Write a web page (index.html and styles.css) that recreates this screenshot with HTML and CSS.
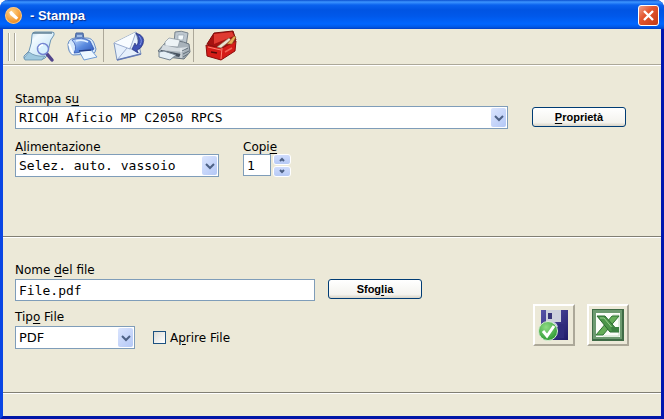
FILE: index.html
```
<!DOCTYPE html>
<html lang="it">

<head>
	<meta charset="UTF-8" />
	<title>Stampa</title>
	<link rel="stylesheet" href="styles.css">
</head>

<body>
	<div class="window">
		<header class="titlebar">
			<svg class="app-icon" viewBox="0 0 16 16" aria-hidden="true">
				<defs>
					<radialGradient id="orange" cx=".4" cy=".3" r=".7">
						<stop offset="0" stop-color="#ffd48a" />
						<stop offset="1" stop-color="#f08a1c" />
					</radialGradient>
				</defs>
				<circle cx="8" cy="8" r="7.500" fill="url(#orange)" stroke="#ffc87e" />
				<path d="M4 5l2-1.500 6.500 6.500-2 2L5 7.500z" fill="#fff" />
			</svg>
			<h1 class="title">- Stampa</h1>
			<button class="close" type="button" aria-label="Chiudi">
				<svg viewBox="0 0 19 19"><path d="M5 5l9 9M14 5l-9 9" stroke="#fff" stroke-width="2.400" /></svg>
			</button>
		</header>

		<nav class="toolbar">
			<span class="grip"></span>
			<div class="tool-group">
				<!-- preview -->
				<button class="tool" type="button" aria-label="Anteprima">
					<svg viewBox="19 29 40 34">
						<defs>
							<linearGradient id="paper" x1="0" y1="0" x2="1" y2="1">
								<stop offset="0" stop-color="#8fc3e2" />
								<stop offset=".3" stop-color="#f2faff" />
								<stop offset="1" stop-color="#b4dcf2" />
							</linearGradient>
						</defs>
						<path d="M32 35q0-3 3-3h17q3 0 2 3-4 4-5 12l-3 10q-1 2-4 2H26q-3 0-2-3l5-5q3-8 3-16z" fill="url(#paper)" stroke="#6a94b4" />
						<path d="M24 58l5-6q6 5 16 4l-3 4H25z" fill="#9fc9df" stroke="#5d87a3" stroke-width=".7" />
						<path d="M33 33h19" stroke="#5f7f94" stroke-width="1.500" />
						<path d="M47 54l5 6" stroke="#51448c" stroke-width="3.500" stroke-linecap="round" />
						<circle cx="43" cy="49" r="5.500" fill="#d9f2ff" fill-opacity=".8" stroke="#7586d2" stroke-width="1.500" />
						<path d="M39 48q1-3 4-3" fill="none" stroke="#fff" stroke-width="1.500" />
					</svg>
				</button>
				<!-- print -->
				<button class="tool" type="button" aria-label="Stampa">
					<svg viewBox="62 29 40 34">
						<defs>
							<linearGradient id="blue" x1="0" y1="0" x2="1" y2="1">
								<stop offset="0" stop-color="#cce4ff" />
								<stop offset=".5" stop-color="#5c8ce0" />
								<stop offset="1" stop-color="#2d55b8" />
							</linearGradient>
						</defs>
						<path d="M75 39l1-6h7l1 6z" fill="#6687c0" stroke="#47659c" />
						<path d="M77 36h5" stroke="#b9d0f5" stroke-width="1.500" />
						<path d="M68 44q1-6 8-6h11q5 0 7 5l2 6q0 4-4 5l-19 1q-5-2-5-11z" fill="#d4e8fb" stroke="#6b8fc4" />
						<path d="M72 40q10-4 18 1l4 8q-4 4-11 3l-9 1q4-7-2-13z" fill="url(#blue)" stroke="#2c4fae" stroke-width=".7" />
						<path d="M76 41q6-2 12 1" fill="none" stroke="#e3f1ff" stroke-width="1.500" />
						<path d="M69 44l4 10" stroke="#fff" stroke-width="2" />
						<path d="M79 51l12-1 6 7-13 3z" fill="#edf7ff" stroke="#6e9bd5" />
						<path d="M79 51l12-1" stroke="#243e88" stroke-width="1.500" />
					</svg>
				</button>
			</div>
			<div class="tool-group">
				<!-- mail -->
				<button class="tool" type="button" aria-label="Invia per e-mail">
					<svg viewBox="109 29 40 34">
						<path d="M114 43l22-11 5 22-24 6z" fill="#e6f0fc" stroke="#8098be" stroke-linejoin="round" />
						<path d="M114 43l16 6 6-17M117 60l10-12M141 54l-12-6" fill="#f8fcff" stroke="#9caed0" />
						<path d="M117 60l24-6" stroke="#6379b5" stroke-width="1.500" />
						<path d="M136 33q10 3 7 11-2 5-6 6l1 3-6-4 3-6 1 3q5-5 0-13z" fill="#3c50b4" stroke="#25327e" stroke-width=".7" />
						<path d="M139 36q4 4 1 9" fill="none" stroke="#8398e5" />
					</svg>
				</button>
				<!-- fax -->
				<button class="tool" type="button" aria-label="Fax">
					<svg viewBox="152 29 40 34">
						<path d="M174 43l1-11q6-2 13 1l-2 13z" fill="#bdc7cf" stroke="#78848e" />
						<path d="M178 35h6l-1 5h-5z" fill="#f4fafc" stroke="#96a4b0" stroke-width=".7" />
						<path d="M158 51l8-9q12-3 23 2l1 8-6 7-17-2z" fill="#a8b2ba" stroke="#68747e" />
						<path d="M165 42l4-4 11 2-2 7-13-1z" fill="#edf3f6" stroke="#919ca5" stroke-width=".8" />
						<path d="M163 45l14 3 11-1-5 5-22-2z" fill="#d5dce1" />
						<path d="M161 50l20 4-2 3-19-4z" fill="#47525f" />
						<path d="M159 52l5-1 12 4-6 5-11-3z" fill="#e4eef5" stroke="#748391" />
						<path d="M182 51l6-3M183 54l6-3M183 57l5-3" stroke="#63707b" />
						<path d="M181 48v10" stroke="#e9eef1" />
					</svg>
				</button>
			</div>
			<div class="tool-group">
				<!-- settings toolbox -->
				<button class="tool" type="button" aria-label="Impostazioni">
					<svg viewBox="199 29 40 34">
						<path d="M207 44l7-11 19-2 3 9-14 10z" fill="#a51210" stroke="#7e0b0a" />
						<path d="M214 34l18-2 2 4-20 8z" fill="#df3a31" />
						<path d="M206 45l16 3 14-7-1 10-14 9-14-4z" fill="#d51c18" stroke="#8c0d0c" />
						<path d="M222 48l-1 11M208 47l13 3" stroke="#ff8272" />
						<path d="M217 47l12-9 2 2-10 8z" fill="#eae4d2" stroke="#8f7455" stroke-width=".6" />
						<path d="M227 44l7-8 2 1-4 7z" fill="#e6b25c" stroke="#8c5620" stroke-width=".6" />
						<path d="M211 52l6 1" stroke="#530907" stroke-width="1.500" />
						<path d="M225 52l7-4" stroke="#f26456" stroke-width="1.500" />
					</svg>
				</button>
			</div>
		</nav>

		<form class="content">
			<section class="panel print-panel">
				<div class="row">
					<div class="field grow">
						<label for="printer">Stampa s<u>u</u></label>
						<div class="combo">
							<select id="printer" class="mono">
								<option>RICOH Aficio MP C2050 RPCS</option>
							</select>
							<svg class="arrow" viewBox="0 0 15 19"><path d="M4 8l4 4 4-4" /></svg>
						</div>
					</div>
					<button class="button" type="button"><u>P</u>roprietà</button>
				</div>
				<div class="row">
					<div class="field tray">
						<label for="tray">A<u>l</u>imentazione</label>
						<div class="combo">
							<select id="tray" class="mono">
								<option>Selez. auto. vassoio</option>
							</select>
							<svg class="arrow" viewBox="0 0 15 19"><path d="M4 8l4 4 4-4" /></svg>
						</div>
					</div>
					<div class="field">
						<label for="copies">Copi<u>e</u></label>
						<div class="spinner">
							<input id="copies" class="mono" type="text" inputmode="numeric" value="1">
							<div class="steps">
								<button type="button" aria-label="Aumenta"><svg viewBox="0 0 16 9"><path d="M6 6l2-2 2 2" /></svg></button>
								<button type="button" aria-label="Diminuisci"><svg viewBox="0 0 16 9"><path d="M6 3l2 2 2-2" /></svg></button>
							</div>
						</div>
					</div>
				</div>
			</section>

			<section class="panel file-panel">
				<div class="file-fields">
					<div class="row">
						<div class="field file-name">
							<label for="filename">Nome <u>d</u>el file</label>
							<input id="filename" class="mono" type="text" value="File.pdf">
						</div>
						<button class="button" type="button">Sfog<u>l</u>ia</button>
					</div>
					<div class="row">
						<div class="field file-type">
							<label for="filetype">Tip<u>o</u> File</label>
							<div class="combo">
								<select id="filetype">
									<option>PDF</option>
								</select>
								<svg class="arrow" viewBox="0 0 15 19"><path d="M4 8l4 4 4-4" /></svg>
							</div>
						</div>
						<div class="check">
							<input id="open-file" type="checkbox">
							<label for="open-file">A<u>p</u>rire File</label>
						</div>
					</div>
				</div>
				<div class="actions">
					<button class="action" type="button" aria-label="Salva">
						<svg viewBox="0 0 38 38">
							<defs>
								<linearGradient id="disk" x1="0" y1="0" x2="1" y2="1">
									<stop offset="0" stop-color="#5754a8" />
									<stop offset="1" stop-color="#1f1a68" />
								</linearGradient>
								<radialGradient id="green" cx=".4" cy=".3" r=".8">
									<stop offset="0" stop-color="#8fdc84" />
									<stop offset="1" stop-color="#229229" />
								</radialGradient>
							</defs>
							<path d="M6 4h27v30H9l-3-3z" fill="url(#disk)" />
							<path d="M11 4h15v12H11z" fill="#cdd1dc" />
							<path d="M13 7h4v6h-4z" fill="#383579" />
							<path d="M14 18h15v14H14z" fill="#2f2b7c" />
							<path d="M16 17q5-1 6 4" fill="none" stroke="#c9cbe6" stroke-width="2" />
							<circle cx="13" cy="25" r="9.500" fill="url(#green)" stroke="#d6efd2" />
							<path d="M8 25l4 5 7-10" fill="none" stroke="#fff" stroke-width="3" />
						</svg>
					</button>
					<button class="action" type="button" aria-label="Esporta in Excel">
						<svg viewBox="0 0 38 38">
							<path d="M3 3h32v32H3z" fill="#3f6b46" />
							<path d="M4 4h29v29H4z" fill="#6d9a70" />
							<path d="M7 7h24v24H7z" fill="#fbfdf9" />
							<path d="M24 9h6v21H14" fill="none" stroke="#c8dfc5" />
							<path d="M23 10h7L14 29H7z" fill="#65ad58" stroke="#2f7334" />
							<path d="M8 10h8l14 16h-9z" fill="#4b9548" stroke="#2b6a30" />
							<path d="M11 12h4l10 12" fill="none" stroke="#9ad08f" />
							<path d="M22 21h8v5h-7z" fill="#3b8040" />
						</svg>
					</button>
				</div>
			</section>
		</form>
		<footer class="statusbar"></footer>
	</div>
</body>

</html>
```
FILE: styles.css
```
* { box-sizing: border-box; }

body {
	margin: 0; background: #fff; color: #000;
	font: 13px/14px "DejaVu Sans", Verdana, sans-serif;
}

button, input, select { font: inherit; color: inherit; margin: 0; }
svg { display: block; }
u { text-underline-offset: 2px; }

.window {
	display: flex; flex-direction: column;
	min-height: 100vh;
	background: #ece9d8;
	border: solid; border-width: 0 3px 3px;
	border-color: #0a46e4 #0016b0 #0016a8 #0a46e4;
	border-radius: 8px 8px 0 0;
}

/* Title bar */
.titlebar {
	display: flex; align-items: center; gap: 8px;
	height: 29px; margin: 0 -3px; padding: 2px 5px 0;
	border-radius: 8px 8px 0 0;
	background: linear-gradient(#0a4fd0 0, #3d95ff 2px, #0a62ee 5px, #0054e3 10px, #0058ea 16px, #0066ff 24px, #0058e6 27px, #003fc4 29px);
}

.app-icon { width: 17px; height: 17px; }

.title {
	flex: 1; margin: 0;
	font: bold 13px/16px "Liberation Sans", Arial, sans-serif;
	color: #fff; text-shadow: 1px 1px 1px #0b2a84;
}

.close {
	width: 21px; height: 21px; padding: 0;
	border: 1px solid #fff; border-radius: 3px;
	background: linear-gradient(135deg, #f0a08a, #e3562f 40%, #c43a14);
}

/* Toolbar */
.toolbar {
	display: flex; align-items: stretch;
	height: 37px; padding: 0 5px;
	border-bottom: 1px solid #fff;
	box-shadow: inset 0 -1px #aca899;
}

.grip {
	width: 7px; margin: 4px 4px 4px 0;
	border: solid #aca899; border-width: 0 1px;
	box-shadow: 1px 0 #fff, inset 1px 0 #fff;
}

.tool-group { display: flex; gap: 3px; }

.tool-group + .tool-group {
	margin-left: 1px; padding-left: 5px;
	border-left: 1px solid #aca899;
	margin-bottom: 3px;
}

.tool { width: 40px; height: 34px; padding: 0; border: 0; background: none; }

/* Form panels */
.content { flex: 1; display: flex; flex-direction: column; }
.panel { border-bottom: 1px solid #fff; box-shadow: inset 0 -1px #817f74; }
.print-panel { padding: 26px 35px 60px 12px; }
.file-panel { flex: 1; display: flex; padding: 25px 32px 44px 12px; }
.file-fields { flex: 1; }

.row { display: flex; align-items: flex-end; gap: 24px; }
.row + .row { margin-top: 11px; }
.file-fields .row + .row { margin-top: 9px; }
label { font-size: 12px; }
.field label { display: block; }
.file-fields .field label { margin-bottom: 2px; }
.grow { flex: 1; }
.tray { width: 204px; }
.file-name { width: 300px; }
.file-name + .button { margin-left: -11px; }
.file-type { width: 120px; }

select, input[type="text"] {
	display: block; width: 100%; height: 23px;
	padding: 0 3px;
	border: 1px solid #7f9db9; border-radius: 0;
	background: #fff; outline: 0;
}

input[type="text"] { height: 22px; }

select { appearance: none; }
.mono { font-family: "DejaVu Sans Mono", monospace; }

.combo { position: relative; }

.arrow {
	position: absolute; top: 2px; right: 2px;
	width: 15px; height: 19px;
	border-radius: 2px;
	background: linear-gradient(135deg, #dbe5fe, #b4c8f6);
	pointer-events: none;
}

.arrow path { fill: none; stroke: #4d6185; stroke-width: 2; }

.spinner { display: flex; gap: 2px; }
.spinner input[type="text"] { width: 28px; }
.steps { display: flex; flex-direction: column; gap: 1px; }

.steps button {
	width: 18px; height: 11px; padding: 0;
	border: 1px solid #fff; border-radius: 3px;
	background: linear-gradient(#cfdcfd, #b7caf5);
}

.steps path { fill: none; stroke: #4d6185; stroke-width: 2; }

.button {
	width: 94px; height: 20px; margin-bottom: 2px; padding: 0;
	border: 1px solid #003c74; border-radius: 3px;
	background: linear-gradient(#fff, #f4f3ee 80%, #d8d3c6);
	font: bold 11px/14px "Liberation Sans", Arial, sans-serif;
}

.check { display: flex; align-items: center; gap: 4px; height: 23px; margin-left: -6px; }

.check input {
	appearance: none;
	width: 13px; height: 13px;
	border: 1px solid #1c5180;
	background: linear-gradient(135deg, #dcdcd7, #fff);
}

.check input:checked { background: #21a121; }

/* Save and export buttons */
.actions { display: flex; align-self: flex-start; gap: 12px; margin-top: 41px; }

.action {
	width: 42px; height: 42px; padding: 0;
	border: 2px solid; border-color: #fff #aca899 #aca899 #fff;
	background: #ece9d8;
}

.statusbar { height: 22px; }
```
